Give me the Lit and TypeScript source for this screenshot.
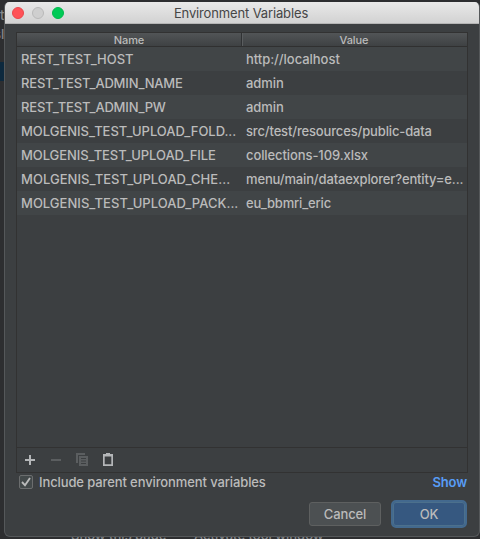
import { LitElement, html, css } from "lit";
import { customElement } from "lit/decorators.js";

// name, name tracking, value, value tracking
const rows: [string, number, string, number][] = [
  ["REST_TEST_HOST", -0.05, "http://localhost", -0.04],
  ["REST_TEST_ADMIN_NAME", -0.18, "admin", -0.05],
  ["REST_TEST_ADMIN_PW", -0.18, "admin", -0.05],
  ["MOLGENIS_TEST_UPLOAD_FOLD...", -0.03, "src/test/resources/public-data", -0.15],
  ["MOLGENIS_TEST_UPLOAD_FILE", -0.08, "collections-109.xlsx", -0.09],
  ["MOLGENIS_TEST_UPLOAD_CHE...", 0.03, "menu/main/dataexplorer?entity=e...", -0.15],
  ["MOLGENIS_TEST_UPLOAD_PACK...", 0.02, "eu_bbmri_eric", -0.17],
];

@customElement("app-root")
export class AppRoot extends LitElement {
  static styles = css`
    :host { display: block; position: relative; width: 480px; height: 539px; overflow: hidden; background: #2d2e30; font-family: Inter, "Liberation Sans", sans-serif; font-size: 13px; font-weight: 500; color: #bbbbbb; }
    * { box-sizing: border-box; }
    .behind { position: absolute; white-space: nowrap; color: #85878a; line-height: 16px; }
    .side1 { left: 0; top: 7px; }
    .side2 { left: -6px; top: 26px; }
    .selected { left: 0; top: 62px; width: 5px; height: 19px; background: #0d293e; }
    .page { left: 71px; top: 527px; }
    .tool { left: 194px; top: 527px; }
    .dialog { position: relative; margin-left: 4px; top: 2px; width: 476px; height: 535px; background: #3c3f41; border: 1px solid #55585a; border-top: 0; border-radius: 5px 5px 6px 6px; overflow: hidden; display: flex; flex-direction: column; }
    .title { height: 22px; margin: 0 -1px; flex: none; background: linear-gradient(#e9e9e9, #d2d2d2); border-bottom: 1px solid #b5b5b5; color: #464646; position: relative; font-weight: 400; text-align: center; line-height: 23px; letter-spacing: -0.14px; padding-right: 2px; }
    .lights { position: absolute; left: 8px; top: 5px; display: flex; gap: 8px; }
    .light { width: 12px; height: 12px; border-radius: 50%; background: #ff5257; border: 1px solid #e9474b; }
    .idle { background: #cfcfcf; border-color: #b9b9b9; }
    .green { background: #00ca56; border-color: #00b94c; }
    .table { margin: 8px 0 0 11px; width: 452px; height: 441px; border: 1px solid #323232; display: flex; flex-direction: column; flex: none; }
    .head { height: 14px; background: linear-gradient(#525557, #3e4143); border-bottom: 1px solid #303030; display: flex; font-size: 11px; line-height: 14px; text-align: center; letter-spacing: -0.1px; flex: none; }
    .hname { width: 225px; border-right: 1px solid #303234; }
    .hvalue { flex: 1; border-left: 1px solid #5a5d5f; padding-right: 2px; }
    .row { height: 24px; display: flex; line-height: 25px; white-space: nowrap; flex: none; }
    .row:nth-child(even) { background: #414547; }
    .name { width: 225px; padding-left: 4px; }
    .value { padding-left: 4px; }
    .tools { margin-top: auto; height: 25px; border-top: 1px solid #323232; }
    .icons { display: block; }
    .options { height: 21px; display: flex; align-items: flex-start; padding: 0 12px 0 14px; line-height: 18px; letter-spacing: -0.11px; }
    .check { display: block; width: 14px; height: 14px; margin: 2px 6px 0 0; }
    .show { margin-left: auto; color: #589df6; font-weight: 600; }
    .buttons { display: flex; justify-content: flex-end; align-items: center; gap: 10px; height: 28px; margin: 6px 12px 0 0; }
    .button { width: 72px; height: 24px; border: 1px solid #5e6060; border-radius: 3px; background: #4c5052; line-height: 23px; text-align: center; letter-spacing: -0.15px; }
    .ok { width: 76px; height: 28px; border: 2px solid #43698e; border-radius: 5px; box-shadow: inset 0 0 0 1px #4c708c; background: #365880; line-height: 25px; }
  `;

  render() {
    return html`
      <div class="behind side1">t</div><div class="behind side2">sl</div><div class="behind selected"></div>
      <div class="behind page">Show this page</div><div class="behind tool">Activate tool window</div>
      <section class="dialog">
        <header class="title"><div class="lights"><i class="light"></i><i class="light idle"></i><i class="light green"></i></div><span>Environment Variables</span></header>
        <div class="table">
          <div class="head"><div class="hname">Name</div><div class="hvalue">Value</div></div>
          ${rows.map(([n, ns, v, vs]) => html`<div class="row"><div class="name" style="letter-spacing:${ns}px">${n}</div><div class="value" style="letter-spacing:${vs}px">${v}</div></div>`)}
          <div class="tools">
            <svg class="icons" width="110" height="24" viewBox="17 448 110 24" fill="none">
              <path d="M25 460h10M30 455v10" stroke="#b4b6b8" stroke-width="2"/>
              <path d="M51 460h10" stroke="#5b5e60" stroke-width="2"/>
              <path d="M76 453h9v2h-7v8h-2z" fill="#5b5e60"/>
              <path d="M79 456h9v10h-9zM81 458v1h5v-1zM81 460.500v1h5v-1zM81 463v1h5v-1z" fill="#5b5e60" fill-rule="evenodd"/>
              <path d="M103 454h3v-1h4v1h3v12h-10zM104.700 456.500v7.800h6.600v-7.800z" fill="#b4b6b8" fill-rule="evenodd"/>
            </svg>
          </div>
        </div>
        <div class="options">
          <svg class="check" viewBox="0 0 14 14" fill="none"><rect x=".5" y=".5" width="13" height="13" rx="1.500" fill="#43494a" stroke="#6b6d6e"/><path d="M3 7l3 3.300L11 3" stroke="#bbbbbb" stroke-width="1.900"/></svg>
          <span>Include parent environment variables</span><span class="show">Show</span>
        </div>
        <div class="buttons"><div class="button">Cancel</div><div class="button ok">OK</div></div>
      </section>`;
  }
}
